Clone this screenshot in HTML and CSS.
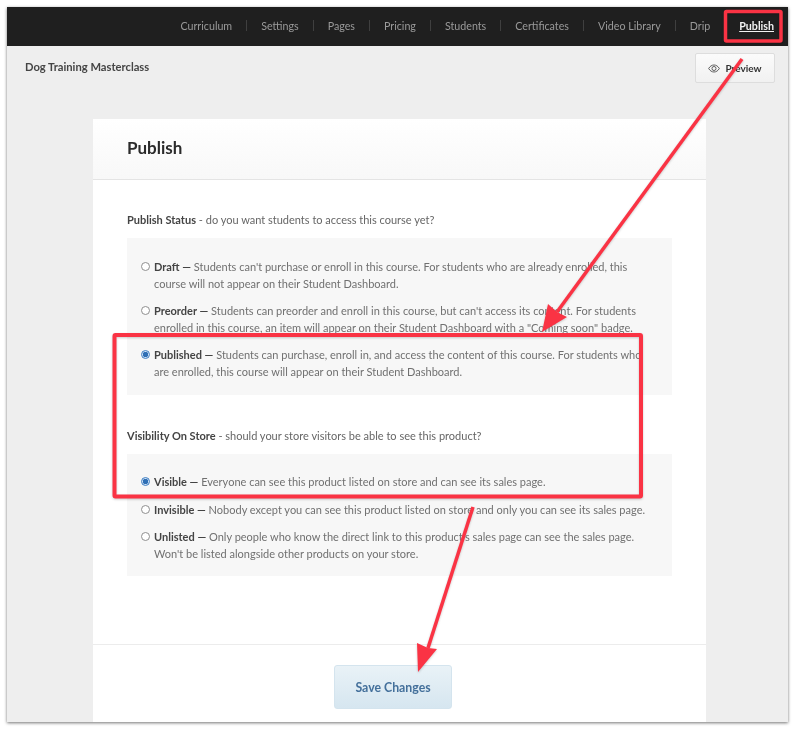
FILE: index.html
```html
<!DOCTYPE html>
<html lang="en">
<head>
<meta charset="utf-8">
<title>Publish</title>
<link rel="stylesheet" href="styles.css">
</head>
<body>
<div class="frame">
  <nav class="topnav">
    <a>Curriculum</a><a>Settings</a><a>Pages</a><a>Pricing</a><a>Students</a><a>Certificates</a><a>Video Library</a><a>Drip</a><a class="active">Publish</a>
  </nav>
  <div class="titlebar">
    <h2>Dog Training Masterclass</h2>
    <button class="preview" type="button">
      <svg width="12" height="9" viewBox="0 0 13 9" fill="none" stroke="#555" stroke-width="1"><path d="M.7 4.5C2.2 2 4.2.7 6.5.7s4.3 1.3 5.8 3.8c-1.500 2.500-3.500 3.800-5.800 3.800S2.200 7 .7 4.500z"/><circle cx="6.500" cy="4.500" r="2.200"/></svg>
      <span>Preview</span>
    </button>
  </div>
  <main class="card">
    <header class="card-head"><h1>Publish</h1></header>
    <div class="card-body">
      <p class="label"><b>Publish Status</b> - do you want students to access this course yet?</p>
      <div class="panel panel-one">
        <label class="opt"><input type="radio" name="status"><span><b>Draft —</b> Students can't purchase or enroll in this course. For students who are already enrolled, this<br>course will not appear on their Student Dashboard.</span></label>
        <label class="opt"><input type="radio" name="status"><span><b>Preorder —</b> Students can preorder and enroll in this course, but can't access its content. For students<br>enrolled in this course, an item will appear on their Student Dashboard with a "Coming soon" badge.</span></label>
        <label class="opt"><input type="radio" name="status" checked><span><b>Published —</b> Students can purchase, enroll in, and access the content of this course. For students who<br>are enrolled, this course will appear on their Student Dashboard.</span></label>
      </div>
      <p class="label label-two"><b>Visibility On Store</b> - should your store visitors be able to see this product?</p>
      <div class="panel panel-two">
        <label class="opt"><input type="radio" name="vis" checked><span><b>Visible —</b> Everyone can see this product listed on store and can see its sales page.</span></label>
        <label class="opt"><input type="radio" name="vis"><span><b>Invisible —</b> Nobody except you can see this product listed on store and only you can see its sales page.</span></label>
        <label class="opt"><input type="radio" name="vis"><span><b>Unlisted —</b> Only people who know the direct link to this product's sales page can see the sales page.<br>Won't be listed alongside other products on your store.</span></label>
      </div>
    </div>
    <footer class="card-foot"><button class="save" type="button">Save Changes</button></footer>
  </main>
</div>
<svg class="marks" width="800" height="733" viewBox="0 0 800 733" fill="none">
  <g class="ink">
    <rect x="725.500" y="11.500" width="55.500" height="29.500" rx="1" stroke-width="3.500"/>
    <rect x="114.500" y="335" width="526.500" height="161.500" rx="1" stroke-width="4"/>
    <path d="M742 59L557 312" stroke-width="3.500"/>
    <path d="M473 507L428 648" stroke-width="3.500"/>
  </g>
  <path class="head" d="M542 332L548 304L557 312L567 317z"/>
  <path class="head" d="M418 672L417 643L428 648L437 649z"/>
</svg>
</body>
</html>
```
FILE: styles.css
```css
* { box-sizing: border-box; }
html, body { margin: 0; height: 733px; overflow: hidden; background: #fff; }
body {
  padding: 7px 12px 11px 7px;
  font-family: Lato, "Liberation Sans", sans-serif;
  position: relative;
}
.frame {
  height: 715px;
  background: #eeeeee;
  display: flex;
  flex-direction: column;
  overflow: hidden;
  box-shadow: 0 1px 3px rgba(0,0,0,.55);
  filter: blur(.35px);
}
.topnav {
  height: 39px;
  flex: none;
  background: #1f1f1f;
  display: flex;
  align-items: center;
  justify-content: flex-end;
  padding: 0 14px 2px 0;
  font-size: 10.700px;
  color: #9a9a9a;
}
.topnav a { padding: 0 14px; border-left: 1px solid #3f3f3f; line-height: 11px; }
.topnav a:first-child { border-left: 0; }
.topnav .active { color: #f2f2f2; text-decoration: underline; padding-right: 0; font-weight: 700; }
.titlebar {
  height: 73px;
  flex: none;
  padding: 7px 13px 0 18px;
  display: flex;
  justify-content: space-between;
  align-items: flex-start;
}
.titlebar h2 { margin: 7px 0 0; font-size: 11.200px; line-height: 14px; font-weight: 700; color: #444; }
.preview {
  width: 80px; height: 30px;
  border: 1px solid #ddd;
  border-radius: 2px;
  background: linear-gradient(#fbfbfb, #f1f1f1);
  display: flex; align-items: center; justify-content: center; gap: 5px;
  font: 700 10px Lato, sans-serif; color: #333;
  padding: 0;
}
.card {
  width: 613px;
  margin-left: 86px;
  flex: 1;
  background: #fff;
  display: flex;
  flex-direction: column;
}
.card-head {
  height: 61px;
  flex: none;
  padding: 0 34px;
  display: flex; align-items: center;
  background: linear-gradient(#ffffff, #f8f8f8);
  border-bottom: 1px solid #e4e4e4;
}
.card-head h1 { margin: 0 0 4px; font-size: 17px; font-weight: 700; color: #2b2b2b; }
.card-body { padding: 31px 34px 0; height: 465px; flex: none; border-bottom: 1px solid #ececec; }
.label { margin: 0; font-size: 11px; line-height: 17px; color: #666; }
.label b { color: #444; }
.panel { width: 545px; background: #f7f7f7; padding: 20px 14px 0; }
.panel-one { height: 157px; margin-top: 10px; }
.panel-two { height: 122px; margin-top: 10px; padding-top: 19px; }
.panel-two .opt:first-child { margin-bottom: 11px; }
.label-two { margin-top: 32px; }
.opt { display: flex; gap: 4px; font-size: 11px; line-height: 17px; color: #707070; margin-bottom: 10px; white-space: nowrap; }
.opt b { color: #444; }
.opt input {
  appearance: none;
  width: 9px; height: 9px;
  margin: 4px 0 0;
  flex: none;
  border-radius: 50%;
  border: 1px solid #8f8f8f;
  background: #fff;
}
.opt input:checked { border: 1px solid #3f7fc4; background: radial-gradient(circle, #2f6fb5 0 2.500px, #cfe0f2 3px); }
.card-foot { flex: 1; display: flex; justify-content: center; align-items: flex-start; padding: 20px 13px 0 0; }
.save {
  width: 118px; height: 44px;
  border: 1px solid #d4e4ee;
  border-radius: 3px;
  background: linear-gradient(#e9f2f7, #d6e6f0);
  font: 700 12.300px Lato, sans-serif;
  color: #44709b;
}
.marks { position: absolute; left: 0; top: 0; pointer-events: none; filter: drop-shadow(0 1px 1px rgba(0,0,0,.2)); }
.ink { stroke: #fa3344; }
.head { fill: #fa3344; }
```
